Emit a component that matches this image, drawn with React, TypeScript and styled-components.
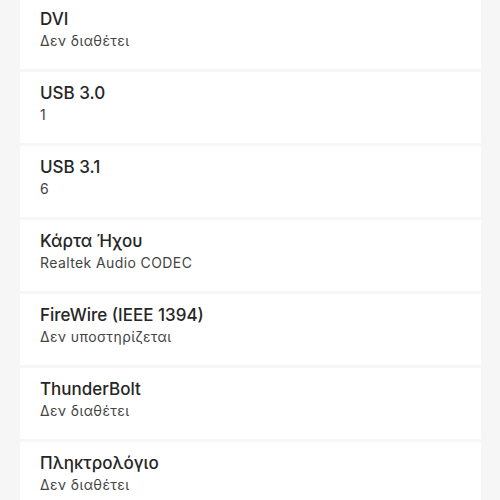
import React from 'react';
import styled, { createGlobalStyle } from 'styled-components';

const GlobalStyle = createGlobalStyle`
  html, body {
    margin: 0;
    padding: 0;
    background: #f6f6f6;
  }
  body {
    font-family: Inter, 'Noto Sans', sans-serif;
    overflow: hidden;
  }
`;

const Page = styled.div`
  height: 500px;
  padding: 0 19px 0 20px;
  overflow: hidden;
`;

const SpecList = styled.ul`
  list-style: none;
  margin: -2px 0 0;
  padding: 0;
  display: flex;
  flex-direction: column;
  gap: 3px;
  background: #f7f7f7;
`;

const SpecRow = styled.li`
  background: #fff;
  padding: 11px 20px 0;
  height: 60px;
`;

const SpecName = styled.div`
  font-size: 17px;
  line-height: 20px;
  font-weight: 500;
  color: #262626;
`;

const SpecValue = styled.div`
  margin-top: 2px;
  font-size: 14px;
  line-height: 20px;
  letter-spacing: 0.4px;
  color: #444;
`;

const specs: { name: string; value: string }[] = [
  { name: 'DVI', value: 'Δεν διαθέτει' },
  { name: 'USB 3.0', value: '1' },
  { name: 'USB 3.1', value: '6' },
  { name: 'Κάρτα Ήχου', value: 'Realtek Audio CODEC' },
  { name: 'FireWire (IEEE 1394)', value: 'Δεν υποστηρίζεται' },
  { name: 'ThunderBolt', value: 'Δεν διαθέτει' },
  { name: 'Πληκτρολόγιο', value: 'Δεν διαθέτει' },
];

const App: React.FC = () => {
  return (
    <>
      <GlobalStyle />
      <Page>
        <SpecList>
          {specs.map((s) => (
            <SpecRow key={s.name}>
              <SpecName>{s.name}</SpecName>
              <SpecValue>{s.value}</SpecValue>
            </SpecRow>
          ))}
        </SpecList>
      </Page>
    </>
  );
};

export default App;
